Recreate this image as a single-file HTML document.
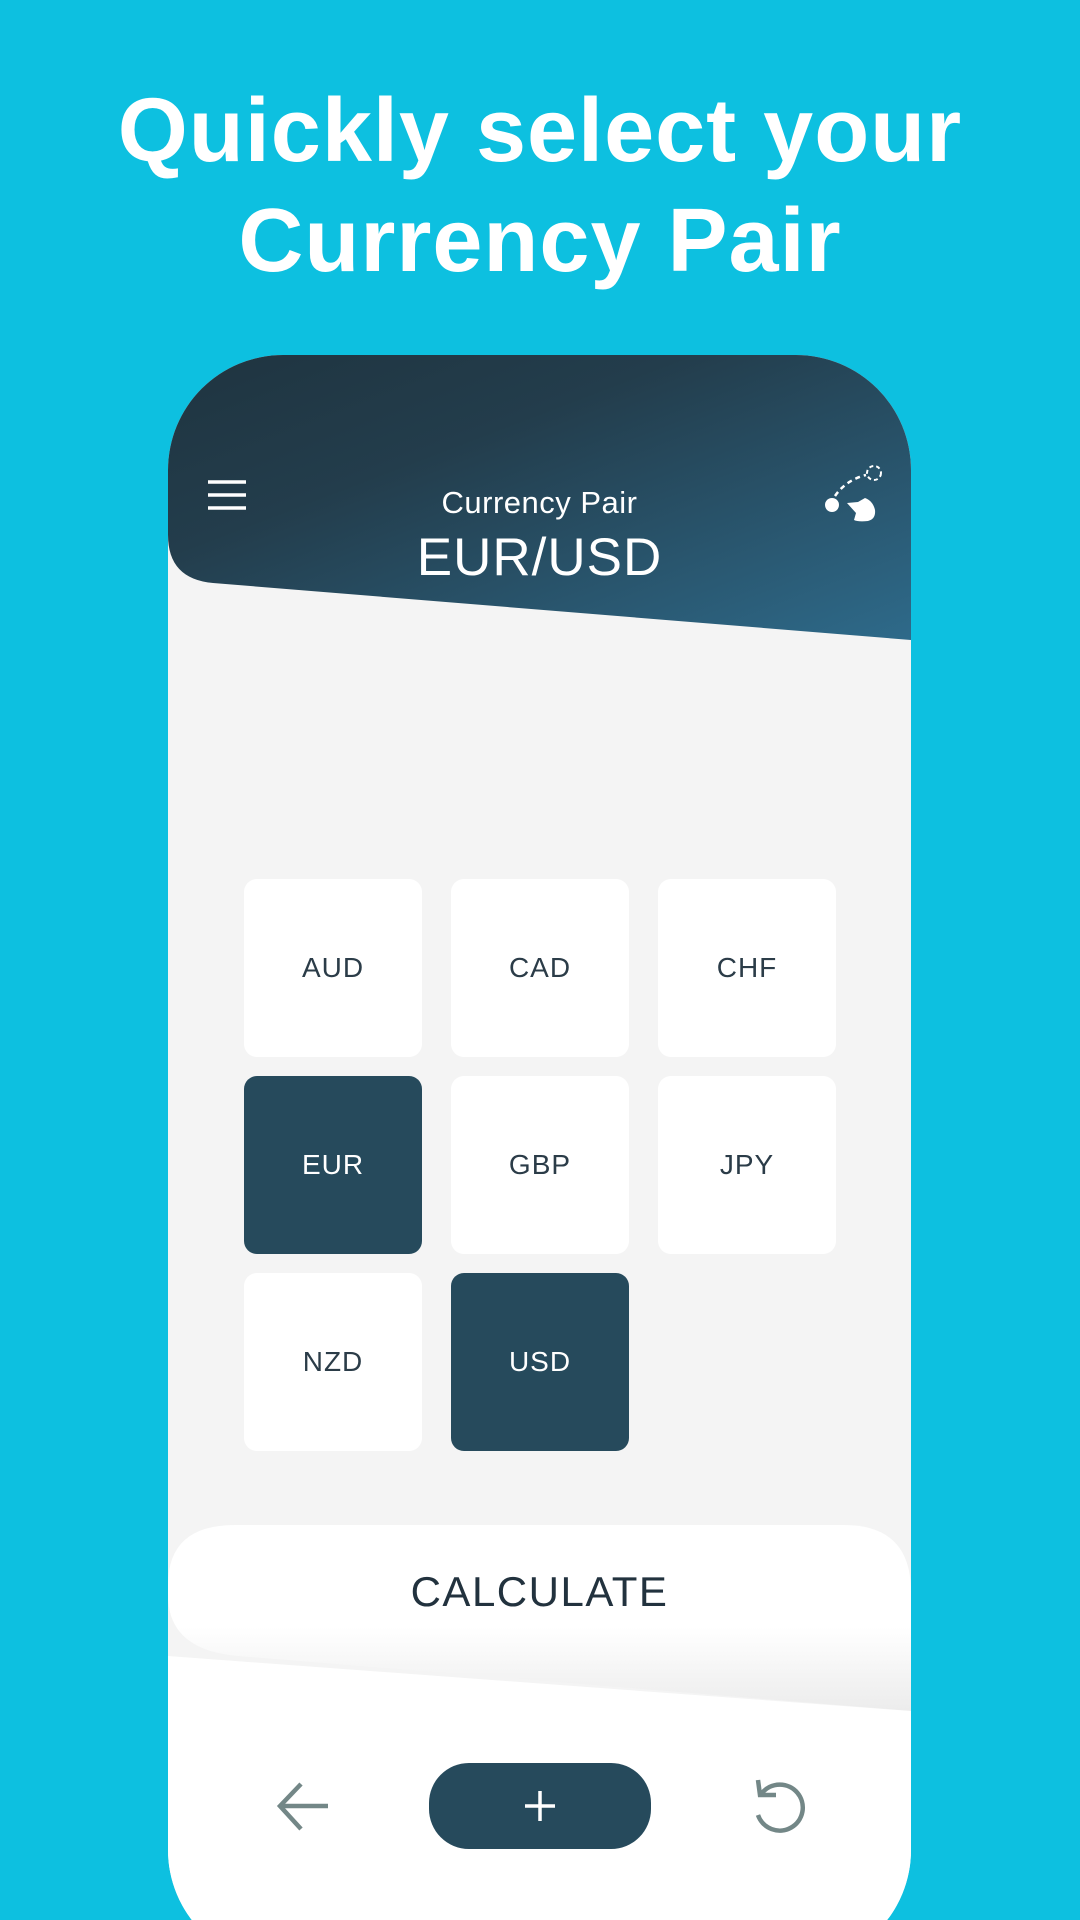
<!DOCTYPE html>
<html><head><meta charset="utf-8">
<style>
html,body{margin:0;padding:0;width:1080px;height:1920px;overflow:hidden}
body{background:#0dc0e0;position:relative;font-family:"Liberation Sans",sans-serif}
.h1{position:absolute;left:0;width:1080px;text-align:center;color:#fff;font-weight:bold;font-size:90px;letter-spacing:1px}
.phone{position:absolute;left:168px;top:355px;width:743px;height:1610px;background:#f4f4f4;border-radius:115px;overflow:hidden}
.tile{position:absolute;width:178px;height:178px;background:#fff;border-radius:13px;color:#2b3c48;font-size:28px;display:flex;align-items:center;justify-content:center;letter-spacing:1px}
.tile.d{background:#264a5c;color:#fff}
</style></head><body>
<div class="h1" style="top:80px">Quickly select your</div>
<div class="h1" style="top:190px">Currency Pair</div>
<div class="phone">
<svg width="743" height="1610" style="position:absolute;left:0;top:0">
<defs>
<linearGradient id="g" x1="0" y1="0" x2="1" y2="1">
<stop offset="0" stop-color="#1f3440"/><stop offset="0.35" stop-color="#233d4c"/><stop offset="1" stop-color="#2e6a8a"/></linearGradient>
<linearGradient id="w" x1="0" y1="0" x2="0" y2="1">
<stop offset="0.55" stop-color="#fff"/><stop offset="1" stop-color="#ececec"/></linearGradient>
</defs>
<path d="M0 0 H743 V285 L45 228 Q0 224 0 180 Z" fill="url(#g)"/>
<path d="M0 1230 Q0 1170 67 1170 H676 Q743 1170 743 1237 V1356 L70 1301 Q0 1295 0 1240 Z" fill="url(#w)"/>
<rect x="0" y="1356" width="743" height="300" fill="#fff"/>
<path d="M0 1301 L743 1356 V1400 H0 Z" fill="#fff"/>
<g stroke="#fff" stroke-width="3.5"><line x1="40" y1="127" x2="78" y2="127"/><line x1="40" y1="140" x2="78" y2="140"/><line x1="40" y1="153" x2="78" y2="153"/></g>
<circle cx="664" cy="150" r="7" fill="#fff"/>
<circle cx="706" cy="118" r="7" fill="none" stroke="#fff" stroke-width="2" stroke-dasharray="4 3"/>
<path d="M667 141 Q678 125 698 120" fill="none" stroke="#fff" stroke-width="2.5" stroke-dasharray="5 4"/>
<path d="M679 148 L688 158 L686 165 Q690 167 700 166 Q708 164 707 155 Q705 146 697 143 L690 147 Z" fill="#fff"/>
<rect x="261" y="1408" width="222" height="86" rx="40" fill="#264a5c"/>
<g stroke="#fff" stroke-width="3.5"><line x1="372" y1="1436" x2="372" y2="1466"/><line x1="357" y1="1451" x2="387" y2="1451"/></g>
<g stroke="#738787" stroke-width="4.5" fill="none"><line x1="113" y1="1451" x2="160" y2="1451"/><polyline points="133,1429 112,1451 133,1474"/>
<path d="M594 1438 A23 23 0 1 1 590 1460"/><polyline points="590,1425 592,1440 608,1440"/></g>
</svg>
<div style="position:absolute;top:130px;width:743px;text-align:center;color:#fff;font-size:31px;letter-spacing:0.5px">Currency Pair</div>
<div style="position:absolute;top:172px;width:743px;text-align:center;color:#fff;font-size:53px;letter-spacing:1px">EUR/USD</div>
<div class="tile" style="left:76px;top:524px">AUD</div>
<div class="tile" style="left:283px;top:524px">CAD</div>
<div class="tile" style="left:490px;top:524px">CHF</div>
<div class="tile d" style="left:76px;top:721px">EUR</div>
<div class="tile" style="left:283px;top:721px">GBP</div>
<div class="tile" style="left:490px;top:721px">JPY</div>
<div class="tile" style="left:76px;top:918px">NZD</div>
<div class="tile d" style="left:283px;top:918px">USD</div>
<div style="position:absolute;top:1213px;width:743px;text-align:center;color:#22323e;font-size:42px;letter-spacing:1.5px">CALCULATE</div>
</div>
</body></html>
